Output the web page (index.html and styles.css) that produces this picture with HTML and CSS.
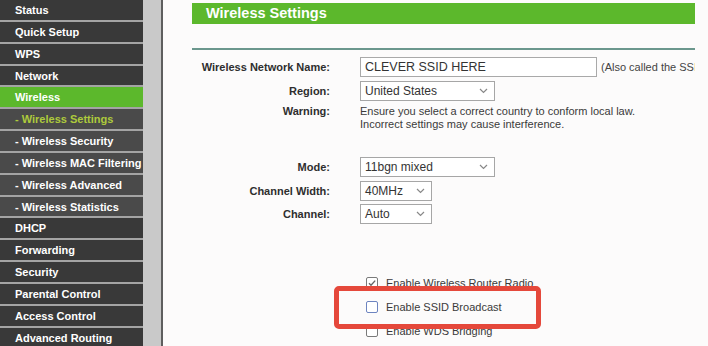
FILE: index.html
```html
<!DOCTYPE html>
<html lang="en">

<head>
    <meta charset="UTF-8">
    <meta name="viewport" content="width=device-width, initial-scale=1.0">
    <title>Wireless Settings</title>
    <link rel="stylesheet" href="styles.css">
</head>

<body>
    <div class="page">
        <div class="menu">
            <div class="menu-item">Status</div>
            <div class="menu-item">Quick Setup</div>
            <div class="menu-item">WPS</div>
            <div class="menu-item">Network</div>
            <div class="menu-item active">Wireless</div>
            <div class="menu-item sub current">- Wireless Settings</div>
            <div class="menu-item sub">- Wireless Security</div>
            <div class="menu-item sub">- Wireless MAC Filtering</div>
            <div class="menu-item sub">- Wireless Advanced</div>
            <div class="menu-item sub">- Wireless Statistics</div>
            <div class="menu-item">DHCP</div>
            <div class="menu-item">Forwarding</div>
            <div class="menu-item">Security</div>
            <div class="menu-item">Parental Control</div>
            <div class="menu-item">Access Control</div>
            <div class="menu-item">Advanced Routing</div>
        </div>
        <div class="gutter"></div>

        <div class="main">
            <div class="content">
                <div class="title-bar">Wireless Settings</div>
                <div class="rule"></div>

                <div class="form">
                    <div class="label">Wireless Network Name:</div>
                    <div class="control">
                        <input type="text" class="text-input" value="CLEVER SSID HERE">
                        <span class="hint">(Also called the SSID)</span>
                    </div>

                    <div class="label">Region:</div>
                    <div class="control">
                        <div class="select wide">
                            <span>United States</span>
                            <svg width="9" height="6" viewBox="0 0 9 6"><path d="M1 1l3.5 3.5L8 1" fill="none" stroke="#888" stroke-width="1.2"/></svg>
                        </div>
                    </div>

                    <div class="label top">Warning:</div>
                    <div class="note">
                        Ensure you select a correct country to conform local law.<br>
                        Incorrect settings may cause interference.
                    </div>
                </div>

                <div class="form second">
                    <div class="label">Mode:</div>
                    <div class="control">
                        <div class="select wide">
                            <span>11bgn mixed</span>
                            <svg width="9" height="6" viewBox="0 0 9 6"><path d="M1 1l3.5 3.5L8 1" fill="none" stroke="#888" stroke-width="1.2"/></svg>
                        </div>
                    </div>

                    <div class="label">Channel Width:</div>
                    <div class="control">
                        <div class="select narrow">
                            <span>40MHz</span>
                            <svg width="9" height="6" viewBox="0 0 9 6"><path d="M1 1l3.5 3.5L8 1" fill="none" stroke="#888" stroke-width="1.2"/></svg>
                        </div>
                    </div>

                    <div class="label">Channel:</div>
                    <div class="control">
                        <div class="select narrow">
                            <span>Auto</span>
                            <svg width="9" height="6" viewBox="0 0 9 6"><path d="M1 1l3.5 3.5L8 1" fill="none" stroke="#888" stroke-width="1.2"/></svg>
                        </div>
                    </div>
                </div>

                <div class="checks">
                    <div class="check-row">
                        <span class="box">
                            <svg width="10" height="10" viewBox="0 0 10 10"><path d="M2 5.2l2 2L8.2 2.6" fill="none" stroke="#666" stroke-width="1.4"/></svg>
                        </span>
                        Enable Wireless Router Radio
                    </div>
                    <div class="check-row">
                        <span class="box blue"></span>
                        Enable SSID Broadcast
                    </div>
                    <div class="check-row">
                        <span class="box"></span>
                        Enable WDS Bridging
                    </div>
                </div>
            </div>

            <div class="highlight"></div>
        </div>
    </div>
</body>

</html>
```

FILE: styles.css
```css
body {
    margin: 0;
    font-family: "Liberation Sans", Arial, sans-serif;
    background-color: #fcfbfb;
    overflow: hidden;
}

.page {
    display: flex;
    width: 708px;
    height: 346px;
    overflow: hidden;
}

/* left menu */
.menu {
    width: 143px;
    flex-shrink: 0;
    background-color: #3a3a3a;
}

.menu-item {
    height: 19.85px;
    line-height: 21px;
    padding-left: 15px;
    border-bottom: 2px solid #a4a4a4;
    background-color: #393939;
    color: #fff;
    font-size: 11px;
    font-weight: bold;
    white-space: nowrap;
    overflow: hidden;
}

.menu-item.sub {
    background-color: #4a4a4a;
}

.menu-item.active {
    background-color: #5cb82c;
}

.menu-item.current {
    color: #aeca3c;
}

.gutter {
    width: 18px;
    flex-shrink: 0;
    background-color: #c9c9c9;
    border-right: 2px solid #5e5e5e;
}

/* main panel */
.main {
    flex: 1;
    min-width: 0;
    position: relative;
    padding: 3px 13px 0 29px;
}

.content {
    overflow: hidden;
}

.title-bar {
    height: 21px;
    line-height: 21px;
    padding-left: 14px;
    background-color: #5cb82c;
    color: #fff;
    font-size: 14.5px;
    font-weight: bold;
}

.rule {
    height: 2px;
    margin-top: 24px;
    background-color: #6b978d;
}

.form {
    display: grid;
    grid-template-columns: 138px 1fr;
    column-gap: 30px;
    row-gap: 4px;
    margin-top: 7px;
}

.form.second {
    margin-top: 26px;
    row-gap: 3.5px;
}

.label {
    align-self: center;
    text-align: right;
    color: #2e2e2e;
    font-size: 11px;
    font-weight: bold;
    white-space: nowrap;
}

.label.top {
    align-self: start;
    line-height: 13px;
}

.control {
    display: flex;
    align-items: center;
    gap: 4px;
    min-width: 0;
    white-space: nowrap;
}

.text-input {
    width: 237px;
    height: 20px;
    flex-shrink: 0;
    box-sizing: border-box;
    margin: 0;
    padding: 0 4px;
    border: 1px solid #a9a9a9;
    background-color: #fff;
    color: #333;
    font-family: inherit;
    font-size: 12.5px;
}

.hint {
    color: #444;
    font-size: 11px;
}

.select {
    display: flex;
    justify-content: space-between;
    align-items: center;
    height: 20px;
    box-sizing: border-box;
    padding: 0 6px 0 4px;
    border: 1px solid #a6a6a6;
    background-color: #fff;
    color: #333;
    font-size: 12px;
}

.select.wide {
    width: 135px;
}

.select.narrow {
    width: 72px;
}

.note {
    color: #3a3a3a;
    font-size: 11px;
    line-height: 13px;
    white-space: nowrap;
}

/* checkboxes */
.checks {
    margin-top: 47px;
    padding-left: 174px;
}

.check-row {
    display: flex;
    align-items: center;
    gap: 8px;
    height: 24px;
    color: #3a3a3a;
    font-size: 11px;
}

.box {
    display: flex;
    align-items: center;
    justify-content: center;
    width: 12px;
    height: 12px;
    box-sizing: border-box;
    border: 1px solid #7a7a7a;
    border-radius: 2px;
    background-color: #fff;
}

.box.blue {
    border-color: #6d84c0;
}

.highlight {
    position: absolute;
    left: 171px;
    top: 286px;
    width: 207px;
    height: 43px;
    box-sizing: border-box;
    border: 5px solid #e5483b;
    border-radius: 5px;
}
```
